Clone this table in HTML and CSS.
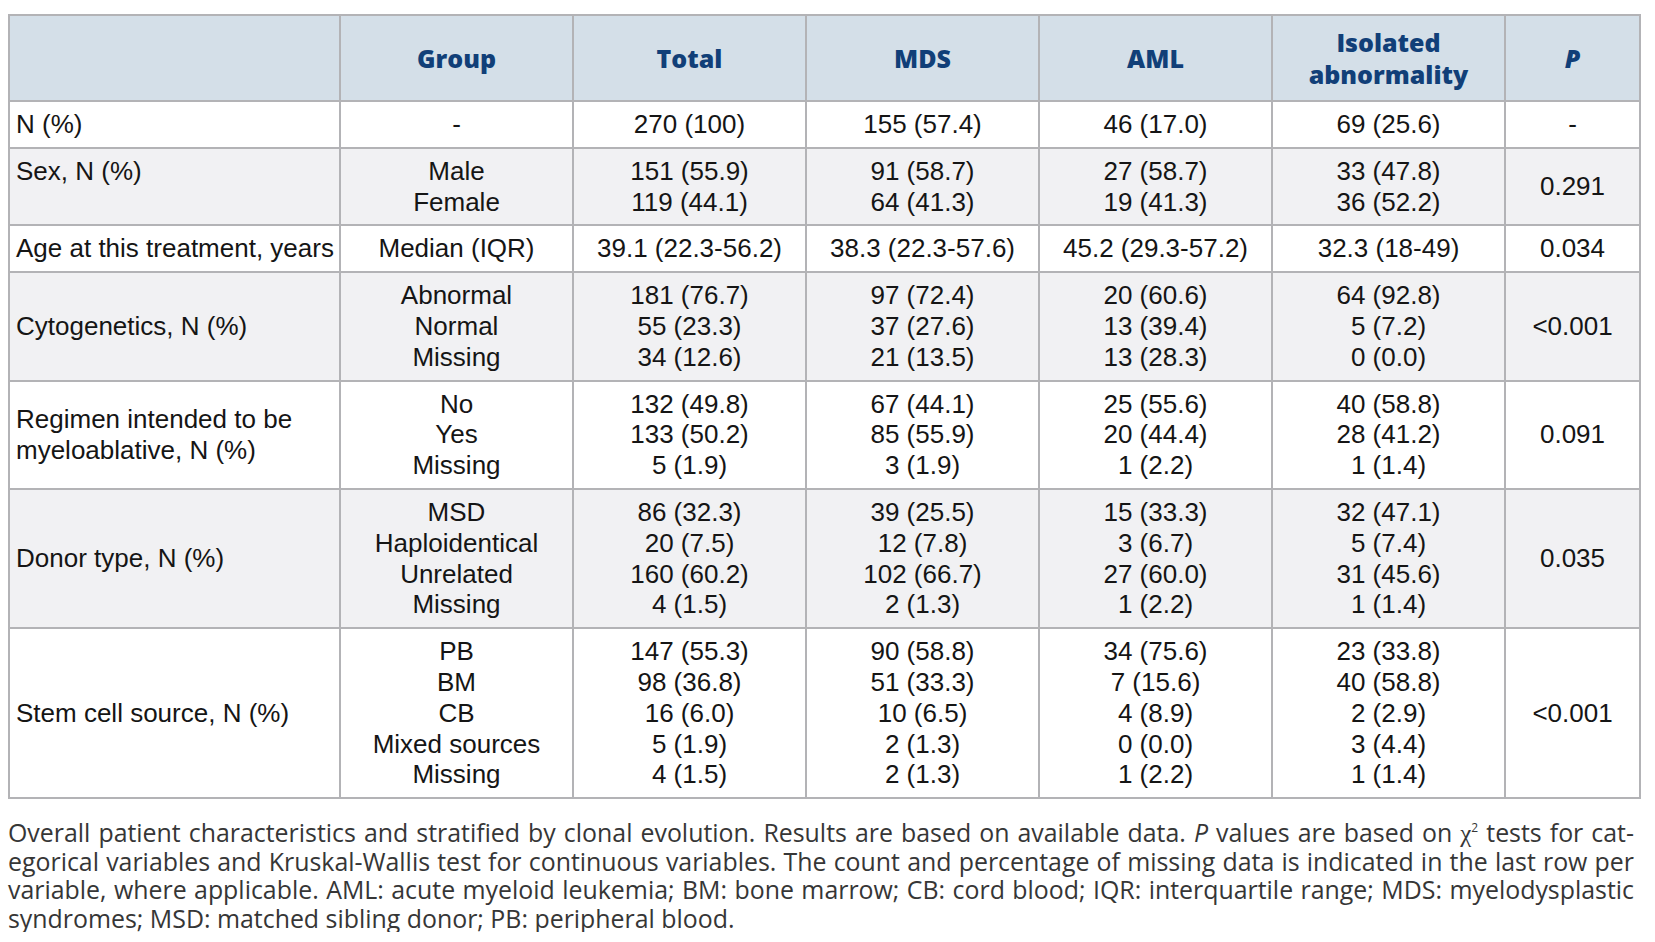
FILE: index.html
```html
<!DOCTYPE html>
<html lang="en">
<head>
<meta charset="utf-8">
<title>Patient characteristics</title>
<link rel="stylesheet" href="styles.css">
</head>
<body>
<div class="page">
<table class="data">
  <colgroup>
    <col class="c-label">
    <col class="c-group">
    <col class="c-val">
    <col class="c-val">
    <col class="c-val">
    <col class="c-val">
    <col class="c-p">
  </colgroup>
  <thead>
    <tr>
      <th></th>
      <th>Group</th>
      <th>Total</th>
      <th>MDS</th>
      <th>AML</th>
      <th>Isolated<br>abnormality</th>
      <th><i>P</i></th>
    </tr>
  </thead>
  <tbody>
    <tr>
      <td class="lab">N (%)</td>
      <td>-</td>
      <td>270 (100)</td>
      <td>155 (57.4)</td>
      <td>46 (17.0)</td>
      <td>69 (25.6)</td>
      <td>-</td>
    </tr>
    <tr class="alt">
      <td class="lab top">Sex, N (%)</td>
      <td>Male<br>Female</td>
      <td>151 (55.9)<br>119 (44.1)</td>
      <td>91 (58.7)<br>64 (41.3)</td>
      <td>27 (58.7)<br>19 (41.3)</td>
      <td>33 (47.8)<br>36 (52.2)</td>
      <td>0.291</td>
    </tr>
    <tr>
      <td class="lab">Age at this treatment, years</td>
      <td>Median (IQR)</td>
      <td>39.1 (22.3-56.2)</td>
      <td>38.3 (22.3-57.6)</td>
      <td>45.2 (29.3-57.2)</td>
      <td>32.3 (18-49)</td>
      <td>0.034</td>
    </tr>
    <tr class="alt">
      <td class="lab">Cytogenetics, N (%)</td>
      <td>Abnormal<br>Normal<br>Missing</td>
      <td>181 (76.7)<br>55 (23.3)<br>34 (12.6)</td>
      <td>97 (72.4)<br>37 (27.6)<br>21 (13.5)</td>
      <td>20 (60.6)<br>13 (39.4)<br>13 (28.3)</td>
      <td>64 (92.8)<br>5 (7.2)<br>0 (0.0)</td>
      <td>&lt;0.001</td>
    </tr>
    <tr>
      <td class="lab">Regimen intended to be<br>myeloablative, N (%)</td>
      <td>No<br>Yes<br>Missing</td>
      <td>132 (49.8)<br>133 (50.2)<br>5 (1.9)</td>
      <td>67 (44.1)<br>85 (55.9)<br>3 (1.9)</td>
      <td>25 (55.6)<br>20 (44.4)<br>1 (2.2)</td>
      <td>40 (58.8)<br>28 (41.2)<br>1 (1.4)</td>
      <td>0.091</td>
    </tr>
    <tr class="alt">
      <td class="lab">Donor type, N (%)</td>
      <td>MSD<br>Haploidentical<br>Unrelated<br>Missing</td>
      <td>86 (32.3)<br>20 (7.5)<br>160 (60.2)<br>4 (1.5)</td>
      <td>39 (25.5)<br>12 (7.8)<br>102 (66.7)<br>2 (1.3)</td>
      <td>15 (33.3)<br>3 (6.7)<br>27 (60.0)<br>1 (2.2)</td>
      <td>32 (47.1)<br>5 (7.4)<br>31 (45.6)<br>1 (1.4)</td>
      <td>0.035</td>
    </tr>
    <tr>
      <td class="lab">Stem cell source, N (%)</td>
      <td>PB<br>BM<br>CB<br>Mixed sources<br>Missing</td>
      <td>147 (55.3)<br>98 (36.8)<br>16 (6.0)<br>5 (1.9)<br>4 (1.5)</td>
      <td>90 (58.8)<br>51 (33.3)<br>10 (6.5)<br>2 (1.3)<br>2 (1.3)</td>
      <td>34 (75.6)<br>7 (15.6)<br>4 (8.9)<br>0 (0.0)<br>1 (2.2)</td>
      <td>23 (33.8)<br>40 (58.8)<br>2 (2.9)<br>3 (4.4)<br>1 (1.4)</td>
      <td>&lt;0.001</td>
    </tr>
  </tbody>
</table>
<p class="caption">
  <span class="line">Overall patient characteristics and stratified by clonal evolution. Results are based on available data. <i>P</i> values are based on <span class="chi">χ</span><sup>2</sup> tests for cat-</span>
  <span class="line">egorical variables and Kruskal-Wallis test for continuous variables. The count and percentage of missing data is indicated in the last row per</span>
  <span class="line">variable, where applicable. AML: acute myeloid leukemia; BM: bone marrow; CB: cord blood; IQR: interquartile range; MDS: myelodysplastic</span>
  <span class="line last">syndromes; MSD: matched sibling donor; PB: peripheral blood.</span>
</p>
</div>
</body>
</html>
```

FILE: styles.css
```css
html, body {
  margin: 0;
  padding: 0;
  background: #ffffff;
}

.page {
  padding: 14px 15px 0 8px;
}

.data {
  border-collapse: collapse;
  table-layout: fixed;
  width: 1632px;
  font-family: "Liberation Sans", Arial, sans-serif;
  font-size: 26px;
  line-height: 30.8px;
  color: #151515;
}

.c-label { width: 331px; }
.c-group { width: 233px; }
.c-val { width: 233px; }
.c-p { width: 135px; }

.data th,
.data td {
  border: 2px solid #b3b3b6;
  text-align: center;
  vertical-align: middle;
  padding: 7px 2px;
}

.data th {
  background: #d4dfe8;
  color: #113f78;
  font-family: "Open Sans", "Liberation Sans", sans-serif;
  font-weight: 800;
  font-size: 25px;
  line-height: 32px;
  padding: 10px 2px;
  height: 64px;
}

.data th i {
  font-style: italic;
}

.data td.lab {
  text-align: left;
  padding-left: 6px;
  white-space: nowrap;
}

.data td.top {
  vertical-align: top;
}

.data tr.alt td {
  background: #f1f1f3;
}

.caption {
  margin: 19px 0 0 0;
  width: 1626px;
  font-family: "Open Sans", "Liberation Sans", sans-serif;
  font-size: 24.9px;
  line-height: 28.5px;
  color: #363636;
}

.caption .line {
  display: block;
  height: 28.5px;
  overflow: visible;
  white-space: nowrap;
  text-align: justify;
  text-align-last: justify;
}

.caption .line.last {
  text-align: left;
  text-align-last: left;
}

.caption .chi {
  font-family: "Liberation Serif", serif;
  line-height: 0;
}

.caption sup {
  font-size: 12px;
  line-height: 0;
  vertical-align: 10px;
}
```
